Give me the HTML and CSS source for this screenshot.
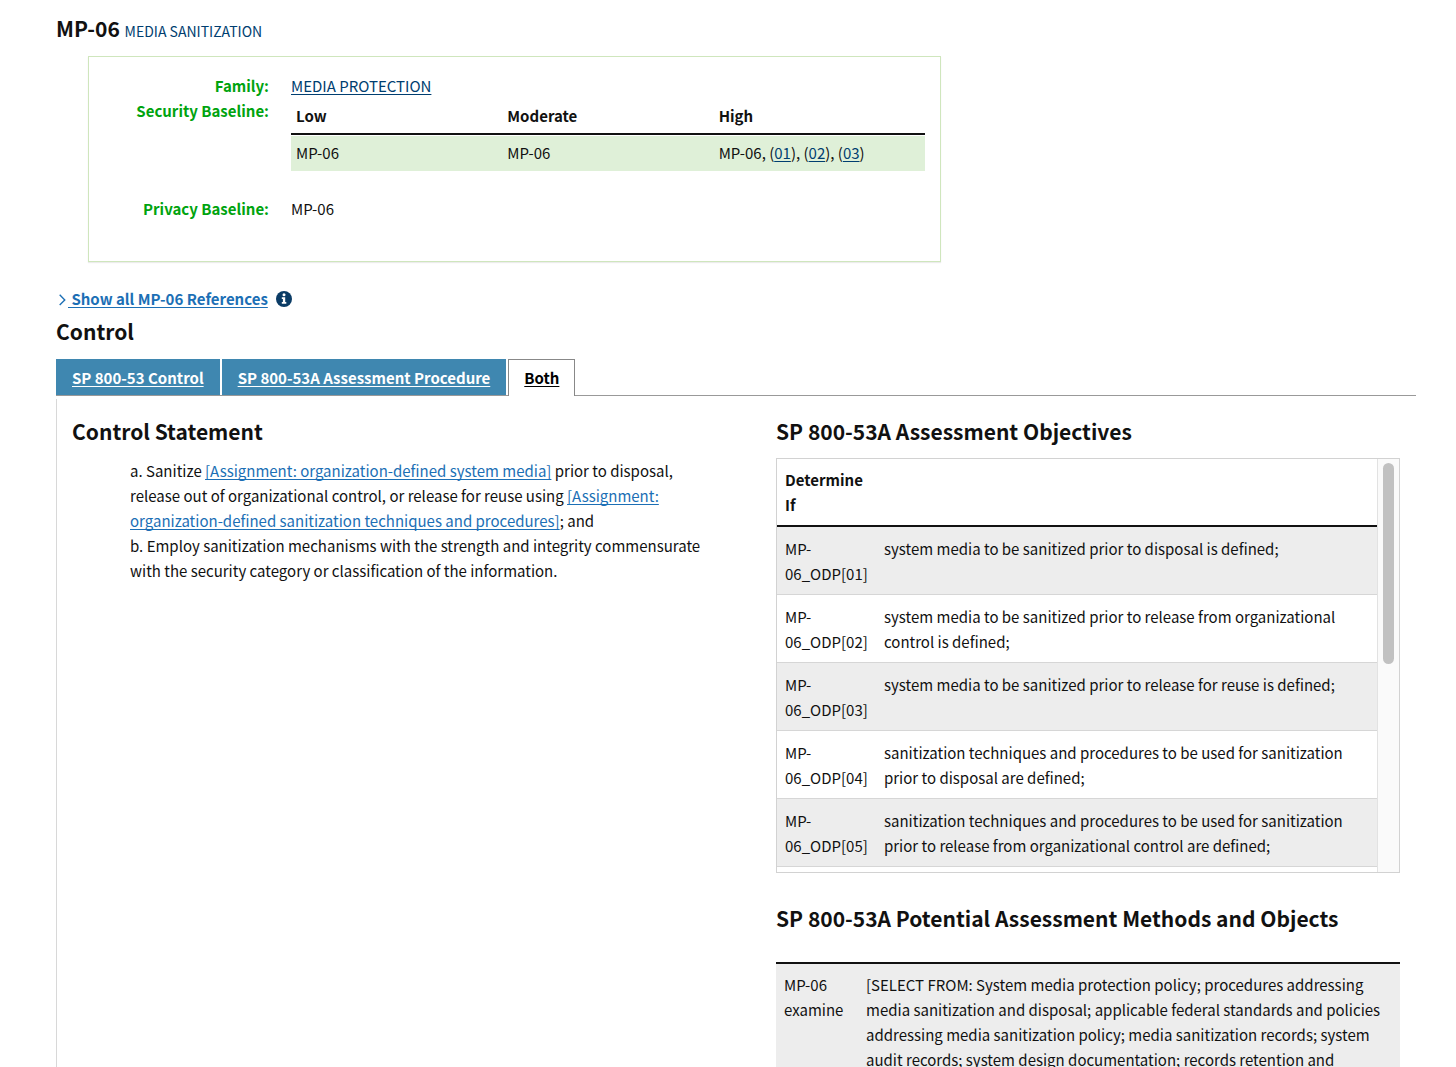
FILE: index.html
```html
<!DOCTYPE html>
<html lang="en">
<head>
<meta charset="utf-8">
<meta name="viewport" content="width=device-width, initial-scale=1">
<title>MP-06 Media Sanitization</title>
<link rel="stylesheet" href="styles.css">
</head>
<body>
<main class="page">
  <h1 class="title">MP-06 <small class="title-name">MEDIA SANITIZATION</small></h1>

  <dl class="summary">
    <dt>Family:</dt>
    <dd><a class="navy" href="#family">MEDIA PROTECTION</a></dd>
    <dt>Security Baseline:</dt>
    <dd>
      <table class="baseline">
        <thead>
          <tr><th scope="col">Low</th><th scope="col">Moderate</th><th scope="col">High</th></tr>
        </thead>
        <tbody>
          <tr>
            <td>MP-06</td>
            <td>MP-06</td>
            <td>MP-06, (<a class="navy" href="#e1">01</a>), (<a class="navy" href="#e2">02</a>), (<a class="navy" href="#e3">03</a>)</td>
          </tr>
        </tbody>
      </table>
    </dd>
    <dt>Privacy Baseline:</dt>
    <dd>MP-06</dd>
  </dl>

  <div class="references">
    <a class="references-link" href="#references"><svg class="chevron" viewBox="0 0 13 14" aria-hidden="true"><path d="M4 2.5 L9.500 8 L4 13.500" fill="none" stroke="currentColor" stroke-width="1.500"/></svg><span>&nbsp;Show all MP-06 References</span></a>
    <svg class="info" viewBox="0 0 16 16" role="img" aria-label="Information"><circle cx="8" cy="8" r="8" fill="#0b3c66"/><circle cx="8" cy="3.700" r="1.500" fill="#fff"/><path d="M5.800 6.200h3.400v4.800h1.100v1.700H5.800v-1.700h1.100V7.900H5.800z" fill="#fff"/></svg>
  </div>

  <h2 class="control-heading">Control</h2>
  <nav class="tabs">
    <a class="tab" href="#control">SP 800-53 Control</a>
    <a class="tab" href="#procedure">SP 800-53A Assessment Procedure</a>
    <a class="tab tab-active" href="#both" aria-current="page">Both</a>
  </nav>

  <div class="panel">
    <section>
      <h3 class="heading">Control Statement</h3>
      <div class="statement">
        <p>a. Sanitize <a class="blue" href="#odp1">[Assignment: organization-defined system media]</a> prior to disposal, release out of organizational control, or release for reuse using <a class="blue" href="#odp2">[Assignment: organization-defined sanitization techniques and procedures]</a>; and</p>
        <p>b. Employ sanitization mechanisms with the strength and integrity commensurate with the security category or classification of the information.</p>
      </div>
    </section>

    <section>
      <h3 class="heading">SP 800-53A Assessment Objectives</h3>
      <div class="objectives-box">
        <div class="objectives-scroll">
          <table class="objectives">
            <thead>
              <tr><th class="key" scope="col">Determine If</th><th></th></tr>
            </thead>
            <tbody>
              <tr><td>MP-06_ODP[01]</td><td>system media to be sanitized prior to disposal is defined;</td></tr>
              <tr><td>MP-06_ODP[02]</td><td>system media to be sanitized prior to release from organizational control is defined;</td></tr>
              <tr><td>MP-06_ODP[03]</td><td>system media to be sanitized prior to release for reuse is defined;</td></tr>
              <tr><td>MP-06_ODP[04]</td><td>sanitization techniques and procedures to be used for sanitization prior to disposal are defined;</td></tr>
              <tr><td>MP-06_ODP[05]</td><td>sanitization techniques and procedures to be used for sanitization prior to release from organizational control are defined;</td></tr>
              <tr><td>MP-06_ODP[06]</td><td>sanitization techniques and procedures to be used for sanitization prior to release for reuse are defined;</td></tr>
            </tbody>
          </table>
        </div>
        <div class="track" aria-hidden="true"><div class="thumb"></div></div>
      </div>

      <h3 class="heading heading-methods">SP 800-53A Potential Assessment Methods and Objects</h3>
      <table class="methods">
        <tbody>
          <tr>
            <td class="method-key">MP-06 examine</td>
            <td>[SELECT FROM: System media protection policy; procedures addressing media sanitization and disposal; applicable federal standards and policies addressing media sanitization policy; media sanitization records; system audit records; system design documentation; records retention and disposition policy]</td>
          </tr>
        </tbody>
      </table>
    </section>
  </div>
</main>
</body>
</html>
```
FILE: styles.css
```css
* {
  box-sizing: border-box;
}

body {
  margin: 0;
  background: #fff;
  color: #111;
  font-family: "Noto Sans CJK SC", "Noto Sans", sans-serif;
  font-size: 15px;
  line-height: 25px;
}

h1, h2, h3, p, dl, dd {
  margin: 0;
}

a {
  text-decoration-skip-ink: none;
  text-underline-offset: 2px;
}

table {
  width: 100%;
  border-collapse: separate;
  border-spacing: 0;
  table-layout: fixed;
}

th, td {
  text-align: left;
  vertical-align: top;
}

.page {
  display: flex;
  flex-direction: column;
  min-height: 100vh;
  padding: 15px 40px 0 56px;
}

.title,
.control-heading,
.heading {
  font-size: 21px;
  line-height: 26px;
  font-weight: 700;
}

.title {
  margin-bottom: 12px;
}

.title-name {
  font-size: 14px;
  font-weight: 400;
  color: #003e70;
}

.navy {
  color: #003e70;
}

.blue {
  color: #1c6fb5;
}

/* Control summary card */
.summary {
  display: grid;
  grid-template-columns: 180px 1fr;
  column-gap: 22px;
  max-width: 853px;
  margin-left: 32px;
  padding: 16px 15px 40px 0;
  border: 1px solid #cfe6bd;
  box-shadow: 0 1px 1px #ececec;
}

.summary dt {
  text-align: right;
  font-weight: 700;
  color: #00a30e;
}

.baseline {
  margin-bottom: 25px;
}

.baseline th {
  padding: 5px;
  border-bottom: 2px solid #111;
}

.baseline td {
  padding: 4px 5px 6px;
  border-top: 1px solid #fff;
  background: #dff0d8;
}

/* References link */
.references {
  display: flex;
  align-items: center;
  gap: 8px;
  margin-top: 24px;
}

.references-link {
  display: flex;
  align-items: center;
  color: #1c6fb5;
  font-weight: 700;
  text-decoration: none;
}

.references-link span {
  text-decoration: underline;
  text-decoration-skip-ink: none;
}

.chevron {
  width: 12px;
  height: 14px;
}

.info {
  width: 16px;
  height: 16px;
}

.control-heading {
  margin: 7px 0 15px;
}

/* Tabs */
.tabs {
  display: flex;
  gap: 2px;
  border-bottom: 1px solid #999;
}

.tab {
  padding: 5px 15px;
  border: 1px solid #3f87b0;
  border-bottom: 0;
  background: #3f87b0;
  color: #fff;
  font-weight: 700;
}

.tab-active {
  margin-bottom: -1px;
  border-color: #888;
  background: #fff;
  color: #000;
}

/* Two-column panel */
.panel {
  display: grid;
  grid-template-columns: 632fr 624fr;
  column-gap: 72px;
  flex: 1;
  margin-top: 3px;
  padding: 19px 16px 0 15px;
  border-left: 1px solid #d8d8d8;
}

.heading {
  margin-bottom: 14px;
}

.statement {
  padding-left: 58px;
}

.objectives-box {
  display: flex;
  height: 415px;
  border: 1px solid #d2d2d2;
}

.objectives-scroll {
  flex: 1;
  overflow-y: auto;
  scrollbar-width: none;
}

.track {
  width: 22px;
  padding: 4px 5px;
  border-left: 1px solid #e2e2e2;
  background: #fafafa;
}

.thumb {
  width: 11px;
  height: 201px;
  border-radius: 6px;
  background: #c1c1c1;
}

.objectives th {
  padding: 8px;
  border-bottom: 2px solid #111;
}

.objectives td {
  padding: 9px 8px 8px;
  border-bottom: 1px solid #d6d6d6;
}

.objectives .key {
  width: 99px;
}

.objectives tbody tr:nth-child(odd),
.methods tr {
  background: #ededed;
}

.heading-methods {
  margin: 32px 0 31px;
}

.methods {
  border-top: 2px solid #111;
}

.methods td {
  padding: 8px;
}

.methods .method-key {
  width: 82px;
}
```
